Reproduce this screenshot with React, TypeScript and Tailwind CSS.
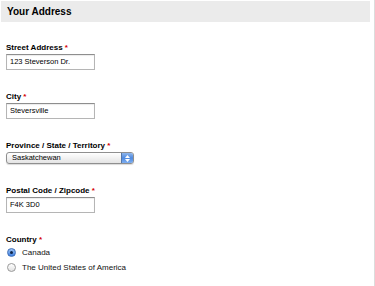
export default function App() {
  const fields = [
    { label: "Street Address", value: "123 Steverson Dr." },
    { label: "City", value: "Steversville" },
  ];

  return (
    <div
      className="relative h-[286px] w-[375px] overflow-hidden border-r border-[#dcdcdc] bg-white pt-[1px] text-[#111]"
      style={{ fontFamily: '"Liberation Sans", Arial, sans-serif' }}
    >
      {/* Section header */}
      <div className="ml-[1px] flex h-[21px] w-[369px] items-center bg-[#ebebeb] pl-[6px]">
        <h2 className="text-[10px] font-bold leading-none text-black">Your Address</h2>
      </div>

      <div className="flex flex-col gap-[22px] pl-[6px] pt-[21px]">
        {fields.map((f) => (
          <Field key={f.label} label={f.label}>
            <TextBox value={f.value} />
          </Field>
        ))}

        <Field label="Province / State / Territory">
          <div className="flex h-[12px] w-[128px] items-center overflow-hidden rounded-[3px] border border-[#8f8f8f] bg-gradient-to-b from-white to-[#e4e4e4] shadow-[0_1px_1px_rgba(0,0,0,0.15)]">
            <span className="flex-1 pl-[5px] text-[7.5px] leading-none text-black">Saskatchewan</span>
            <div className="flex h-full w-[12px] flex-col items-center justify-center gap-[1px] border-l border-[#5577a8] bg-gradient-to-b from-[#8fb6ec] via-[#4f8ae0] to-[#7eaef0]">
              <svg width="5" height="3" viewBox="0 0 5 3">
                <path d="M0 3 L2.5 0 L5 3 Z" fill="#fff" />
              </svg>
              <svg width="5" height="3" viewBox="0 0 5 3">
                <path d="M0 0 L2.5 3 L5 0 Z" fill="#fff" />
              </svg>
            </div>
          </div>
        </Field>

        <Field label="Postal Code / Zipcode">
          <TextBox value="F4K 3D0" />
        </Field>

        <div>
          <Label text="Country" />
          <div className="flex flex-col">
            <Radio checked label="Canada" />
            <Radio label="The United States of America" />
          </div>
        </div>
      </div>
    </div>
  );
}

function Label({ text }: { text: string }) {
  return (
    <div className="h-[10px] text-[8px] font-bold leading-[10px] text-black">
      {text} <span className="text-[#d40000]">*</span>
    </div>
  );
}

function Field({ label, children }: { label: string; children: React.ReactNode }) {
  return (
    <div>
      <Label text={label} />
      <div className="mt-[1px]">{children}</div>
    </div>
  );
}

function TextBox({ value }: { value: string }) {
  return (
    <div className="flex h-[16px] w-[89px] items-center border border-[#b5b5b5] border-t-[#8e8e8e] bg-white pl-[3px] shadow-[inset_0_1px_1px_rgba(0,0,0,0.08)]">
      <span className="text-[7.5px] leading-none text-black">{value}</span>
    </div>
  );
}

function Radio({ label, checked = false }: { label: string; checked?: boolean }) {
  return (
    <div className="flex h-[15px] items-center pl-[1px]">
      {checked ? (
        <span className="flex h-[9px] w-[9px] items-center justify-center rounded-full border border-[#3f6fb8] bg-gradient-to-b from-[#9cc2f2] to-[#3d7fe0]">
          <span className="h-[3px] w-[3px] rounded-full bg-[#10264a]" />
        </span>
      ) : (
        <span className="h-[9px] w-[9px] rounded-full border border-[#9a9a9a] bg-gradient-to-b from-white to-[#e2e2e2]" />
      )}
      <span className="ml-[6px] text-[8px] leading-none text-[#111]">{label}</span>
    </div>
  );
}
